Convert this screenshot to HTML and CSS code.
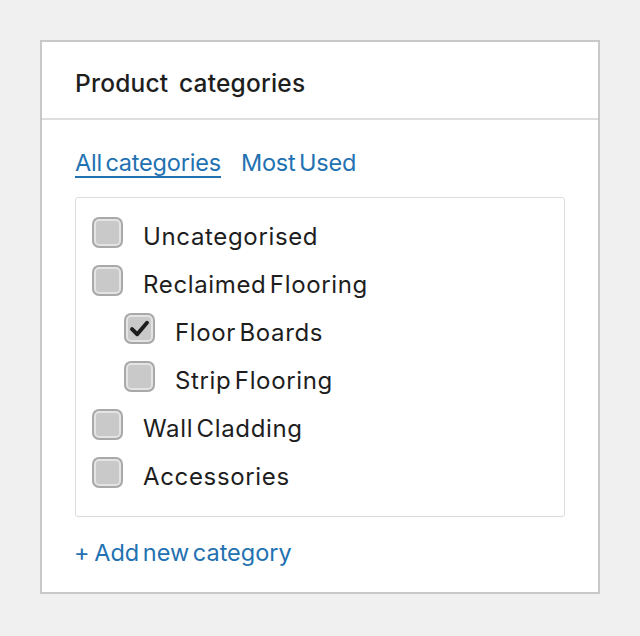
FILE: index.html
```html
<!DOCTYPE html>
<html>
<head>
<meta charset="utf-8">
<link rel="stylesheet" href="styles.css">
</head>
<body>
<div class="card">
  <div class="card-head"><h2 class="title">Product categories</h2></div>
  <div class="card-body">
    <div class="tabs">
      <a class="tab active">All categories</a>
      <a class="tab">Most Used</a>
    </div>
    <ul class="list">
      <li class="row"><span class="cb"></span><span class="label">Uncategorised</span></li>
      <li class="row"><span class="cb"></span><span class="label">Reclaimed Flooring</span></li>
      <li class="row child"><span class="cb checked"><svg viewBox="0 0 20 20" width="23" height="23"><path d="M3.5 10.5 L8 15 L16.5 5" fill="none" stroke="#1d1d1d" stroke-width="3.4" stroke-linecap="round" stroke-linejoin="round"/></svg></span><span class="label">Floor Boards</span></li>
      <li class="row child"><span class="cb"></span><span class="label">Strip Flooring</span></li>
      <li class="row"><span class="cb"></span><span class="label">Wall Cladding</span></li>
      <li class="row"><span class="cb"></span><span class="label">Accessories</span></li>
    </ul>
    <a class="add"><span class="plus">+</span> Add new category</a>
  </div>
</div>
</body>
</html>
```
FILE: styles.css
```css
html, body { margin: 0; padding: 0; }
body {
  background: #f0f0f0;
  padding: 40px;
  font-family: Inter, "Noto Sans", sans-serif;
  color: #1e1e1e;
}
.card {
  width: 560px;
  height: 554px;
  box-sizing: border-box;
  background: #fff;
  border: 2px solid #c8c8c8;
}
.card-head {
  height: 76px;
  border-bottom: 2px solid #dedede;
  display: flex;
  align-items: center;
  padding: 0 33px;
}
.title {
  margin: 0;
  font-size: 24.5px;
  font-weight: 500;
  word-spacing: 4px;
  letter-spacing: 0.2px;
  padding-top: 6px;
}
.card-body {
  padding: 0 33px;
}
.tabs {
  display: flex;
  gap: 20px;
  height: 77px;
  align-items: flex-start;
  padding-top: 29px;
  box-sizing: border-box;
}
.tab {
  color: #2271b1;
  font-size: 23.5px;
  word-spacing: -3px;
  letter-spacing: -0.2px;
  line-height: 28px;
}
.tab.active {
  border-bottom: 2px solid #2271b1;
  line-height: 27px;
}
.list {
  list-style: none;
  margin: 0;
  padding: 10px 0 20px;
  border: 1px solid #dcdcde;
  border-radius: 3px;
  box-sizing: border-box;
  height: 320px;
}
.row {
  display: flex;
  align-items: center;
  height: 48px;
  padding-left: 16px;
}
.row.child { padding-left: 48px; }
.cb {
  width: 31px;
  height: 31px;
  box-sizing: border-box;
  background: #c9c9c9;
  border: 2px solid #a9a9a9;
  border-radius: 7px;
  box-shadow: inset 0 0 0 2px #e4e4e4;
  display: flex;
  align-items: center;
  justify-content: center;
  flex: none;
}
.cb svg { display: block; }
.label {
  margin-left: 20px;
  font-size: 24px;
  word-spacing: -4px;
  letter-spacing: 0.65px;
  padding-top: 9px;
}
.add {
  display: block;
  margin-top: 21px;
  color: #2271b1;
  font-size: 23.5px;
  word-spacing: -3px;
  letter-spacing: 0px;
  margin-left: -1px;
}
.plus { margin-right: 1px; }
```
